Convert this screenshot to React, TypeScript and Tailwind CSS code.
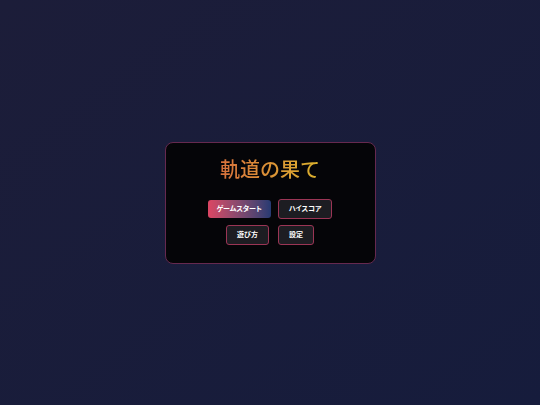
import React from 'react';

function MenuButton({ label, primary }: { label: string; primary?: boolean }) {
  if (primary) {
    return (
      <button className="h-[18px] px-[9px] rounded-[3px] bg-gradient-to-r from-[#dc4563] to-[#263a72] text-white text-[7px] font-bold leading-none [font-feature-settings:'palt']">
        {label}
      </button>
    );
  }
  return (
    <button className="h-[20px] px-[10px] rounded-[3px] border border-[#9b3555] bg-[#1d1d22] text-white text-[7px] font-bold leading-none [font-feature-settings:'palt']">
      {label}
    </button>
  );
}

export default function App() {
  return (
    <div
      className="w-[540px] h-[405px] bg-gradient-to-br from-[#1c1d39] to-[#161c3c] flex items-center justify-center"
      style={{ fontFamily: '"Noto Sans CJK JP", "Noto Sans", sans-serif' }}
    >
      <div className="w-[211px] h-[122px] rounded-[8px] border border-[#66294f] bg-[#050508] flex flex-col items-center pt-[13px]">
        <h1 className="text-[20px] leading-[26px] font-medium bg-gradient-to-r from-[#d8713c] to-[#dbb22c] bg-clip-text text-transparent">
          軌道の果て
        </h1>
        <div className="mt-[17px] flex gap-[7px] items-center">
          <MenuButton label="ゲームスタート" primary />
          <MenuButton label="ハイスコア" />
        </div>
        <div className="mt-[6px] flex gap-[9px] items-center">
          <MenuButton label="遊び方" />
          <MenuButton label="設定" />
        </div>
      </div>
    </div>
  );
}
